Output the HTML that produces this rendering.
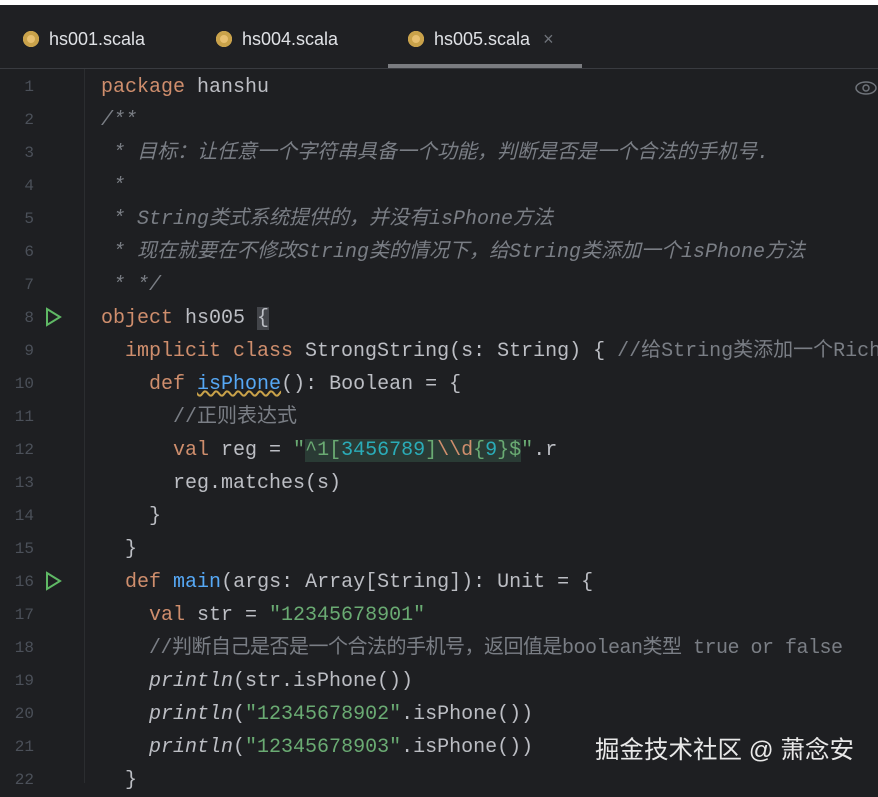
<!DOCTYPE html>
<html><head><meta charset="utf-8"><style>
body{margin:0;width:878px;height:783px;background:#1e1f22;overflow:hidden;position:relative;font-family:"Liberation Mono","Noto Sans CJK SC",monospace;}
.top{position:absolute;left:0;top:0;width:878px;height:5px;background:#fff}
.tabs{position:absolute;left:0;top:5px;width:878px;height:63px;background:#1f2023;border-bottom:1px solid #393b40}
.tab{position:absolute;top:24px;font-family:"Liberation Sans",sans-serif;font-size:18px;color:#dfe1e5}
.ic{display:inline-block;width:16px;height:16px;border-radius:50%;background:#c9a24a;vertical-align:-2px;margin-right:10px;box-shadow:inset 0 0 0 4px #c9a24a,inset 0 0 0 8px #e8c070}
.ul{position:absolute;left:388px;top:64px;width:194px;height:4px;background:#7a7c80}
.gut{position:absolute;left:84px;top:69px;width:1px;height:714px;background:#2b2d30}
.ln{position:absolute;left:0;width:34px;text-align:right;font-size:16px;color:#4b5059}
.c{position:absolute;left:101px;font-size:20px;color:#bcbec4;white-space:pre;line-height:33px}
.k{color:#cf8e6d}.s{color:#6aab73}.cm{color:#7a7e85;font-style:italic}.cn{color:#7a7e85}.f{color:#56a8f5}.it{font-style:italic}
.z{letter-spacing:-0.5px}
.wm{position:absolute;left:595px;top:731px;font-family:"Liberation Sans","Noto Sans CJK SC",sans-serif;font-size:24.5px;color:#e8e8e8}
</style></head><body>
<div class="top"></div>
<div class="tabs">
<div class="tab" style="left:23px"><span class="ic"></span>hs001.scala</div>
<div class="tab" style="left:216px"><span class="ic"></span>hs004.scala</div>
<div class="tab" style="left:408px"><span class="ic"></span>hs005.scala <span style="color:#6f737a;margin-left:8px">×</span></div>
</div>
<div class="ul"></div>
<div class="gut"></div>
<svg style="position:absolute;left:855px;top:80px" width="22" height="16"><ellipse cx="11" cy="8" rx="10" ry="6" fill="none" stroke="#6f737a" stroke-width="1.5"/><circle cx="11" cy="8" r="3" fill="none" stroke="#6f737a" stroke-width="1.5"/></svg>
<svg style="position:absolute;left:44px;top:307px" width="18" height="20"><path d="M3 2 L16 10 L3 18 Z" fill="none" stroke="#5fb865" stroke-width="2"/></svg>
<svg style="position:absolute;left:44px;top:571px" width="18" height="20"><path d="M3 2 L16 10 L3 18 Z" fill="none" stroke="#5fb865" stroke-width="2"/></svg>
<div id="lns"></div>
<div class="c" style="top:71px"><span class="k">package</span> hanshu
<span class="cm">/**</span>
<span class="cm"> * 目标：让任意一个字符串具备一个功能，判断是否是一个合法的手机号.</span>
<span class="cm"> *</span>
<span class="cm"> * String类式系统提供的，并没有isPhone方法</span>
<span class="cm"> * 现在就要在不修改String类的情况下，给String类添加一个isPhone方法</span>
<span class="cm"> * */</span>
<span class="k">object</span> hs005 <span style="background:#43454a">{</span>
  <span class="k">implicit class</span> StrongString(s: String) { <span class="cn">//给String类添加一个Rich</span>
    <span class="k">def</span> <span class="f" style="text-decoration:underline wavy #c9a24a">isPhone</span>(): Boolean = {
      <span class="cn">//正则表达式</span>
      <span class="k">val</span> reg = <span class="s">"<span style="background:#2a3b35">^1[<span style="color:#2aacb8">3456789</span>]<span style="color:#cf8e6d">\\d</span>{<span style="color:#2aacb8">9</span>}$</span>"</span>.r
      reg.matches(s)
    }
  }
  <span class="k">def</span> <span class="f">main</span>(args: Array[String]): Unit = {
    <span class="k">val</span> str = <span class="s">"12345678901"</span>
    <span class="cn z">//判断自己是否是一个合法的手机号，返回值是boolean类型 true or false</span>
    <span class="it">println</span>(str.isPhone())
    <span class="it">println</span>(<span class="s">"12345678902"</span>.isPhone())
    <span class="it">println</span>(<span class="s">"12345678903"</span>.isPhone())
  }</div>
<script>
var h='';for(var i=1;i<=22;i++){h+='<div class="ln" style="top:'+(78+(i-1)*33)+'px">'+i+'</div>';}
document.getElementById('lns').innerHTML=h;
</script>
<div class="wm">掘金技术社区 @ 萧念安</div>
</body></html>
